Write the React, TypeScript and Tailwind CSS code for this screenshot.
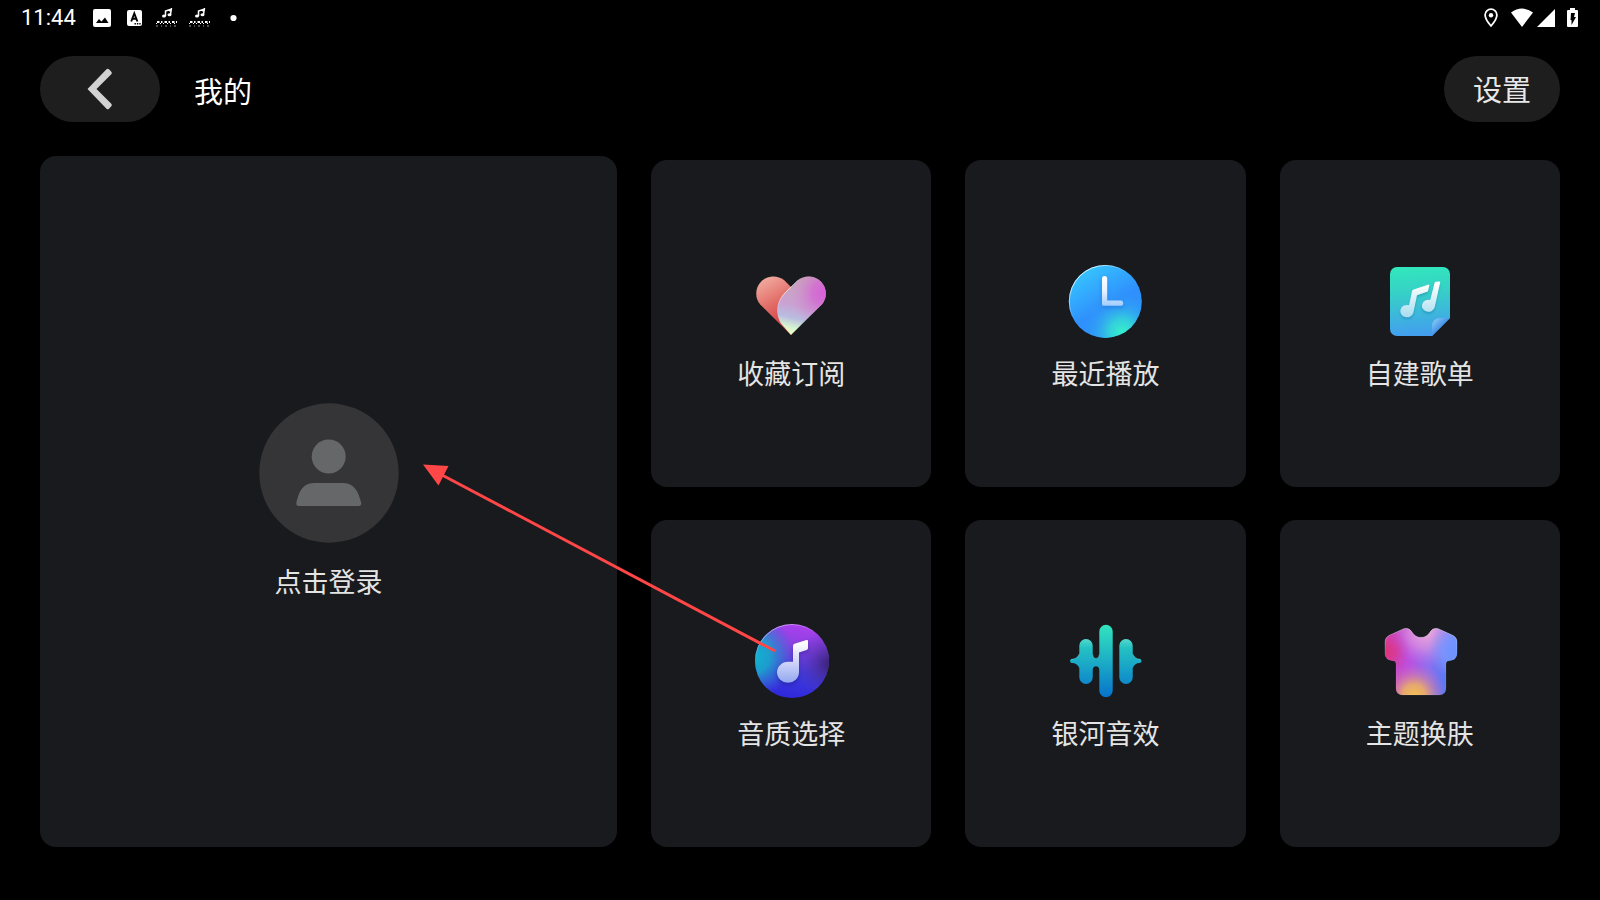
import type { ReactNode } from "react";

function HeartIcon() {
  return (
    <svg viewBox="0 0 80 80" className="size-20" aria-hidden="true">
      <defs>
        <linearGradient id="heart-left" x1="8" y1="14" x2="36" y2="62" gradientUnits="userSpaceOnUse">
          <stop offset="0" stopColor="#f3b5a8" />
          <stop offset="0.55" stopColor="#e26d68" />
          <stop offset="1" stopColor="#d63c45" />
        </linearGradient>
        <linearGradient id="heart-right" x1="52" y1="14" x2="38" y2="72" gradientUnits="userSpaceOnUse">
          <stop offset="0" stopColor="#c9a7b4" />
          <stop offset="0.5" stopColor="#c9a1d2" />
          <stop offset="0.72" stopColor="#b9bce0" />
          <stop offset="0.88" stopColor="#d5f3cf" />
          <stop offset="1" stopColor="#f0ffc4" />
        </linearGradient>
        <radialGradient id="heart-pink" cx="73" cy="31" r="34" gradientUnits="userSpaceOnUse">
          <stop offset="0" stopColor="#d860d8" />
          <stop offset="0.35" stopColor="#d26cd2" stopOpacity="0.85" />
          <stop offset="1" stopColor="#cf90cf" stopOpacity="0" />
        </radialGradient>
        <linearGradient id="heart-edge" x1="50" y1="14" x2="28" y2="60" gradientUnits="userSpaceOnUse">
          <stop offset="0" stopColor="#fff" stopOpacity="0.1" />
          <stop offset="0.35" stopColor="#fff" stopOpacity="0.7" />
          <stop offset="1" stopColor="#fff" stopOpacity="0.1" />
        </linearGradient>
      </defs>
      <path d="M40 73 9 42.300A17.200 17.200 0 0 1 33 18L40 25 46 40Z" fill="url(#heart-left)" />
      <path d="M40 73 71 42.300A17.200 17.200 0 0 0 47 18L33 32C25 41 25 53 30 61.500Z" fill="url(#heart-right)" />
      <path d="M40 73 71 42.300A17.200 17.200 0 0 0 47 18L33 32C25 41 25 53 30 61.500Z" fill="url(#heart-pink)" />
      <path d="M47 18 33 32C25 41 25 53 30 61.500" fill="none" stroke="url(#heart-edge)" />
    </svg>
  );
}

function ClockIcon() {
  return (
    <svg viewBox="0 0 80 80" className="size-20" aria-hidden="true">
      <defs>
        <linearGradient id="clock-face" x1="16" y1="10" x2="50" y2="66" gradientUnits="userSpaceOnUse">
          <stop offset="0" stopColor="#36c3fe" />
          <stop offset="0.65" stopColor="#2f90fd" />
          <stop offset="1" stopColor="#2d92fa" />
        </linearGradient>
        <radialGradient id="clock-glow" cx="57" cy="70" r="40" gradientUnits="userSpaceOnUse">
          <stop offset="0" stopColor="#35f0cb" />
          <stop offset="0.3" stopColor="#35dcd6" stopOpacity="0.85" />
          <stop offset="0.65" stopColor="#33b4ea" stopOpacity="0.4" />
          <stop offset="1" stopColor="#2f98fa" stopOpacity="0" />
        </radialGradient>
        <linearGradient id="clock-rim" x1="14" y1="12" x2="34" y2="34" gradientUnits="userSpaceOnUse">
          <stop offset="0" stopColor="#fff" stopOpacity="0.95" />
          <stop offset="1" stopColor="#fff" stopOpacity="0" />
        </linearGradient>
        <linearGradient id="clock-hands" x1="0" y1="14" x2="0" y2="44" gradientUnits="userSpaceOnUse">
          <stop offset="0" stopColor="#fff" />
          <stop offset="0.5" stopColor="#e6f1ff" />
          <stop offset="1" stopColor="#9fcbfd" />
        </linearGradient>
      </defs>
      <circle cx="40.3" cy="39.4" r="36.5" fill="url(#clock-face)" />
      <circle cx="40.3" cy="39.4" r="36.5" fill="url(#clock-glow)" />
      <circle cx="40.3" cy="39.4" r="36" fill="none" stroke="url(#clock-rim)" />
      <path
        d="M37 16.5a2.6 2.6 0 0 1 5.2 0V38.6H55.6a2.6 2.6 0 0 1 0 5.2H38.5A1.5 1.5 0 0 1 37 42.3Z"
        fill="url(#clock-hands)"
        className="drop-shadow-[0_2px_2px_rgba(20,80,200,0.35)]"
      />
    </svg>
  );
}

function PlaylistIcon() {
  return (
    <svg viewBox="0 0 80 80" className="size-20" aria-hidden="true">
      <defs>
        <linearGradient id="list-page" x1="36" y1="5" x2="42" y2="74" gradientUnits="userSpaceOnUse">
          <stop offset="0" stopColor="#32e6bd" />
          <stop offset="0.35" stopColor="#36d1c6" />
          <stop offset="1" stopColor="#439df0" />
        </linearGradient>
        <linearGradient id="list-fold" x1="53" y1="57" x2="63" y2="67" gradientUnits="userSpaceOnUse">
          <stop offset="0" stopColor="#8ccdf6" />
          <stop offset="1" stopColor="#3585e6" />
        </linearGradient>
        <linearGradient id="list-note" x1="0" y1="22" x2="0" y2="56" gradientUnits="userSpaceOnUse">
          <stop offset="0" stopColor="#fff" />
          <stop offset="1" stopColor="#a5dcee" />
        </linearGradient>
      </defs>
      <path d="M17 5H63a7 7 0 0 1 7 7V56L52 74H17a7 7 0 0 1-7-7V12a7 7 0 0 1 7-7Z" fill="url(#list-page)" />
      <path d="M52 74V64a8 8 0 0 1 8-8H70Z" fill="url(#list-fold)" />
      <g fill="url(#list-note)" className="drop-shadow-[0_2px_1px_rgba(20,110,160,0.35)]">
        <path d="M32 29.2q.2-1.3 1.5-1.8L48 22.7q1.5-.4 1.2 1l-1 4.8q-.2.9-1 1.2L37 33.3 33.4 50.5A6.6 6.2 0 1 1 29 43.2Z" />
        <path d="M54.6 20.8q.3-.9 1.2-1l3.4-.4q1.2 0 1 1.1L54.7 45.2A6.5 6 0 1 1 50.2 38Z" />
      </g>
    </svg>
  );
}

function QualityIcon() {
  return (
    <svg viewBox="0 0 80 80" className="size-20" aria-hidden="true">
      <defs>
        <linearGradient id="q-base" x1="52" y1="4" x2="38" y2="76" gradientUnits="userSpaceOnUse">
          <stop offset="0" stopColor="#a940ee" />
          <stop offset="0.3" stopColor="#8a42e0" />
          <stop offset="0.65" stopColor="#3f3bd9" />
          <stop offset="1" stopColor="#2f27dc" />
        </linearGradient>
        <radialGradient id="q-cyan" cx="2" cy="34" r="42" gradientUnits="userSpaceOnUse">
          <stop offset="0" stopColor="#10b4d0" />
          <stop offset="0.4" stopColor="#1aa2cd" stopOpacity="0.95" />
          <stop offset="0.7" stopColor="#2c82d2" stopOpacity="0.55" />
          <stop offset="1" stopColor="#3c63d8" stopOpacity="0" />
        </radialGradient>
        <radialGradient id="q-dark" cx="80" cy="42" r="36" gradientUnits="userSpaceOnUse">
          <stop offset="0" stopColor="#352064" />
          <stop offset="0.3" stopColor="#41278b" stopOpacity="0.75" />
          <stop offset="1" stopColor="#5030c0" stopOpacity="0" />
        </radialGradient>
        <linearGradient id="q-rim" x1="24" y1="4" x2="34" y2="26" gradientUnits="userSpaceOnUse">
          <stop offset="0" stopColor="#fff" stopOpacity="0.5" />
          <stop offset="1" stopColor="#fff" stopOpacity="0" />
        </linearGradient>
        <linearGradient id="q-note" x1="0" y1="20" x2="0" y2="62" gradientUnits="userSpaceOnUse">
          <stop offset="0" stopColor="#fff" />
          <stop offset="0.4" stopColor="#dbdcfb" />
          <stop offset="1" stopColor="#8fa5ee" />
        </linearGradient>
      </defs>
      <circle cx="41" cy="39" r="37" fill="url(#q-base)" />
      <circle cx="41" cy="39" r="37" fill="url(#q-cyan)" />
      <circle cx="41" cy="39" r="37" fill="url(#q-dark)" />
      <circle cx="41" cy="39" r="36.5" fill="none" stroke="url(#q-rim)" />
      <path
        d="M42 24q0-1.8 1.5-2.3L55.5 18q1.5-.4 1.5 1V26q0 1.5-1.4 2L48 30.5V50.3A11 10.500 0 1 1 37 39.800H42Z"
        fill="url(#q-note)"
        className="drop-shadow-[0_2px_2px_rgba(20,20,120,0.4)]"
      />
    </svg>
  );
}

function SoundIcon() {
  return (
    <svg viewBox="0 0 80 80" className="size-20" aria-hidden="true">
      <defs>
        <linearGradient id="s-fill" x1="0" y1="3" x2="0" y2="75" gradientUnits="userSpaceOnUse">
          <stop offset="0" stopColor="#31e4bd" />
          <stop offset="0.5" stopColor="#1caec6" />
          <stop offset="1" stopColor="#0673cc" />
        </linearGradient>
        <linearGradient id="s-cap" x1="0" y1="17" x2="0" y2="26" gradientUnits="userSpaceOnUse">
          <stop offset="0" stopColor="#fff" stopOpacity="0.2" />
          <stop offset="1" stopColor="#fff" stopOpacity="0" />
        </linearGradient>
      </defs>
      <g fill="url(#s-fill)">
        <path d="M14.3 23.7a6.7 6.7 0 0 1 13.4 0V32.5Q28 36.5 31 36.5T34.3 32.5V9.4a6.7 6.7 0 0 1 13.4 0V68.6a6.7 6.7 0 0 1-13.4 0V48Q34 44.3 31 44.3T27.7 48V55.3a6.7 6.7 0 0 1-13.4 0V46Q12 41 7 41a2 2 0 0 1 0-4Q12 37 14.3 32Z" />
        <path d="M54.3 23.7a6.7 6.7 0 0 1 13.4 0V32Q70 37 74.5 37a2 2 0 0 1 0 4Q70 41 67.7 46V55.3a6.7 6.7 0 0 1-13.4 0Z" />
      </g>
      <path d="M14.3 26V23.7a6.7 6.7 0 0 1 13.4 0V26ZM54.3 26V23.7a6.7 6.7 0 0 1 13.4 0V26Z" fill="url(#s-cap)" />
      <path d="M6 37.5Q12 37 14.3 32M27.7 32.5Q28 36.5 31 36.5T34.3 32.5M67.7 32Q70 37 75.5 37.5" fill="none" stroke="#9ff" strokeOpacity="0.3" />
    </svg>
  );
}

const shirt =
  "M24 6.7Q29 5.5 31.5 9.5 35 15.5 41 15.5T50.5 9.5Q53 5.5 58 6.7L73 13.5Q77 15.5 77 20V31Q77 38.3 69 38.7 66 38.7 66 42V66Q66 73 59 73H23Q16 73 16 66V42Q16 38.7 13 38.7 5 38.3 5 31V20Q5 15.5 9 13.5Z";

function ShirtIcon() {
  return (
    <svg viewBox="0 0 80 80" className="size-20" aria-hidden="true">
      <defs>
        <linearGradient id="t-base" x1="8" y1="36" x2="70" y2="44" gradientUnits="userSpaceOnUse">
          <stop offset="0" stopColor="#cf3fae" />
          <stop offset="0.35" stopColor="#bc4fe0" />
          <stop offset="0.65" stopColor="#8e6fee" />
          <stop offset="1" stopColor="#507cf4" />
        </linearGradient>
        <radialGradient id="t-pink" cx="46" cy="9" r="35" gradientUnits="userSpaceOnUse">
          <stop offset="0" stopColor="#f4addb" />
          <stop offset="0.5" stopColor="#e09ade" stopOpacity="0.65" />
          <stop offset="1" stopColor="#c080ee" stopOpacity="0" />
        </radialGradient>
        <radialGradient id="t-red" cx="6" cy="30" r="24" gradientUnits="userSpaceOnUse">
          <stop offset="0" stopColor="#e0317c" />
          <stop offset="0.4" stopColor="#d93a90" stopOpacity="0.8" />
          <stop offset="1" stopColor="#c44bc8" stopOpacity="0" />
        </radialGradient>
        <radialGradient id="t-blue" cx="76" cy="28" r="28" gradientUnits="userSpaceOnUse">
          <stop offset="0" stopColor="#6c94ff" />
          <stop offset="0.5" stopColor="#7b97ff" stopOpacity="0.8" />
          <stop offset="1" stopColor="#8b90f8" stopOpacity="0" />
        </radialGradient>
        <radialGradient id="t-gold" cx="34" cy="74" r="33" gradientUnits="userSpaceOnUse">
          <stop offset="0" stopColor="#f4c052" />
          <stop offset="0.35" stopColor="#e8ab6a" stopOpacity="0.95" />
          <stop offset="0.7" stopColor="#d480a4" stopOpacity="0.45" />
          <stop offset="1" stopColor="#c663cc" stopOpacity="0" />
        </radialGradient>
        <linearGradient id="t-rim" x1="0" y1="6" x2="0" y2="36" gradientUnits="userSpaceOnUse">
          <stop offset="0" stopColor="#fff" stopOpacity="0.4" />
          <stop offset="1" stopColor="#fff" stopOpacity="0.08" />
        </linearGradient>
      </defs>
      <path d={shirt} fill="url(#t-base)" />
      <path d={shirt} fill="url(#t-pink)" />
      <path d={shirt} fill="url(#t-red)" />
      <path d={shirt} fill="url(#t-blue)" />
      <path d={shirt} fill="url(#t-gold)" />
      <path d={shirt} fill="none" stroke="url(#t-rim)" />
    </svg>
  );
}

function MusicStatusIcon() {
  return (
    <svg viewBox="0 0 21 20" className="h-5 w-[21px]" aria-hidden="true" fill="none" stroke="#fff">
      <path d="M9.5 8V3L14 1.500V3.500M14.500 6.500 15.500 0" strokeWidth="1.500" />
      <ellipse cx="8" cy="8" rx="2" ry="1.500" fill="#fff" stroke="none" />
      <ellipse cx="13.500" cy="6.800" rx="2" ry="1.500" fill="#fff" stroke="none" />
      <path d="M1 14H21" strokeWidth="2" strokeDasharray="2.500 1.500 1.500 2" />
      <path d="M0 15.500H21" strokeDasharray="1 3 1 2" />
      <path d="M0 18H21" strokeDasharray="2 3 1 3" strokeOpacity="0.6" />
    </svg>
  );
}

function StatusBar() {
  return (
    <div className="flex h-9 items-center justify-between pr-[22px] pl-[21px]">
      <div className="flex items-center">
        <time className="w-[72px] font-['Roboto',sans-serif] text-[22px] leading-6">11:44</time>
        <div className="flex items-center gap-3">
          <svg viewBox="0 0 18 18" className="size-[18px]" aria-hidden="true">
            <rect width="18" height="18" rx="2" fill="#fff" />
            <path d="M3 14 6 10 8.5 12.500 12 8.500 15.500 14Z" fill="#000" />
          </svg>
          <svg viewBox="0 0 21 18" className="h-[18px] w-[21px]" aria-hidden="true">
            <rect x="4" y="1" width="15" height="16" rx="2" fill="#fff" />
            <path d="M8.200 12.500 11.300 4.500 14.400 12.500M9.300 9.800H13.300" fill="none" stroke="#000" strokeWidth="1.900" />
            <path d="M11.500 14.800H18" stroke="#000" strokeWidth="1.400" strokeDasharray="1.400 1" />
          </svg>
          <MusicStatusIcon />
          <MusicStatusIcon />
          <svg viewBox="0 0 21 18" className="h-[18px] w-[21px]" aria-hidden="true">
            <circle cx="11.500" cy="9" r="3.100" fill="#fff" />
          </svg>
        </div>
      </div>
      <div className="flex items-center">
        <svg viewBox="0 0 14 20" className="mr-[13px] h-5 w-[14px]" aria-hidden="true">
          <path d="M7 1.200A5.900 5.900 0 0 0 1.100 7.100C1.100 11.500 7 18 7 18S12.900 11.500 12.900 7.100A5.900 5.900 0 0 0 7 1.200Z" fill="none" stroke="#fff" strokeWidth="1.800" />
          <circle cx="7" cy="7.200" r="2.200" fill="#fff" />
        </svg>
        <svg viewBox="0 0 22 20" className="mr-1 h-5 w-[22px]" aria-hidden="true">
          <path d="M0 4.500Q11-3.500 22 4.500L11 19Z" fill="#fff" />
        </svg>
        <svg viewBox="0 0 18 20" className="mr-3 h-5 w-[18px]" aria-hidden="true">
          <path d="M18 1V19H0Z" fill="#fff" />
        </svg>
        <svg viewBox="0 0 11 20" className="h-5 w-[11px]" aria-hidden="true">
          <path d="M3 0H8V2H10Q11 2 11 3V18Q11 19 10 19H1Q0 19 0 18V3Q0 2 1 2H3Z" fill="#fff" />
          <path d="M4 5H8L7 9H9L4.500 17V12H3.500Z" fill="#000" />
        </svg>
      </div>
    </div>
  );
}

const tiles: { label: string; icon: ReactNode }[] = [
  { label: "收藏订阅", icon: <HeartIcon /> },
  { label: "最近播放", icon: <ClockIcon /> },
  { label: "自建歌单", icon: <PlaylistIcon /> },
  { label: "音质选择", icon: <QualityIcon /> },
  { label: "银河音效", icon: <SoundIcon /> },
  { label: "主题换肤", icon: <ShirtIcon /> },
];

export default function App() {
  return (
    <div className="flex min-h-screen flex-col bg-black font-['Noto_Sans_CJK_SC',sans-serif] text-white">
      <StatusBar />
      <header className="flex items-center px-10 pt-5">
        <button type="button" aria-label="返回" className="flex h-[66px] w-[120px] items-center justify-center rounded-full bg-[#1e1e1e]">
          <svg viewBox="0 0 26 42" className="h-[42px] w-[26px]" aria-hidden="true">
            <path
              d="M.5 21 19.5 1.300Q20.700.300 22 1.300L24.300 3.800Q25.500 5 24.300 6.200L9.500 21 24.300 35.800Q25.500 37 24.300 38.200L22 40.700Q20.700 41.700 19.500 40.700Z"
              fill="#d2d2d2"
            />
          </svg>
        </button>
        <h1 className="ml-[34px] pt-0.5 text-[29px] leading-10">我的</h1>
        <button type="button" className="ml-auto h-[66px] w-[116px] rounded-full bg-[#1e1e1e] pb-0.5 text-[29px] leading-10 text-[#e8e8e8]">
          设置
        </button>
      </header>
      <main className="relative mx-10 mt-[34px] mb-[53px] grid flex-1 grid-cols-[577fr_909fr] gap-[34px]">
        <button
          type="button"
          className="flex flex-col items-center justify-center gap-[22px] rounded-2xl bg-[#191a1d] pb-1 text-[27px] leading-8 text-[#e4e4e4]"
        >
          <svg viewBox="0 0 140 140" className="size-[140px]" aria-hidden="true">
            <circle cx="70" cy="70" r="69.700" fill="#353538" />
            <circle cx="69.700" cy="53.500" r="17" fill="#666769" />
            <path d="M55 80H84C97 80 100 92 102 99Q103 103 99.500 103H40Q36.500 103 37.500 99C39.500 92 42 80 55 80Z" fill="#666769" />
          </svg>
          点击登录
        </button>
        <div className="mt-1 grid grid-cols-3 grid-rows-2 gap-x-[34px] gap-y-[33px]">
          {tiles.map((tile) => (
            <button
              key={tile.label}
              type="button"
              className="flex flex-col items-center justify-center gap-[15px] rounded-2xl bg-[#191a1d] pt-1 text-[27px] leading-8 text-[#e4e4e4]"
            >
              {tile.icon}
              {tile.label}
            </button>
          ))}
        </div>
        <svg viewBox="0 0 1520 691" className="pointer-events-none absolute inset-0 size-full" aria-hidden="true">
          <path d="M402 319 735 495" stroke="#ff4747" strokeWidth="3" />
          <path d="M383 308.5 408.500 310 398.500 329.500Z" fill="#ff4747" />
        </svg>
      </main>
    </div>
  );
}
